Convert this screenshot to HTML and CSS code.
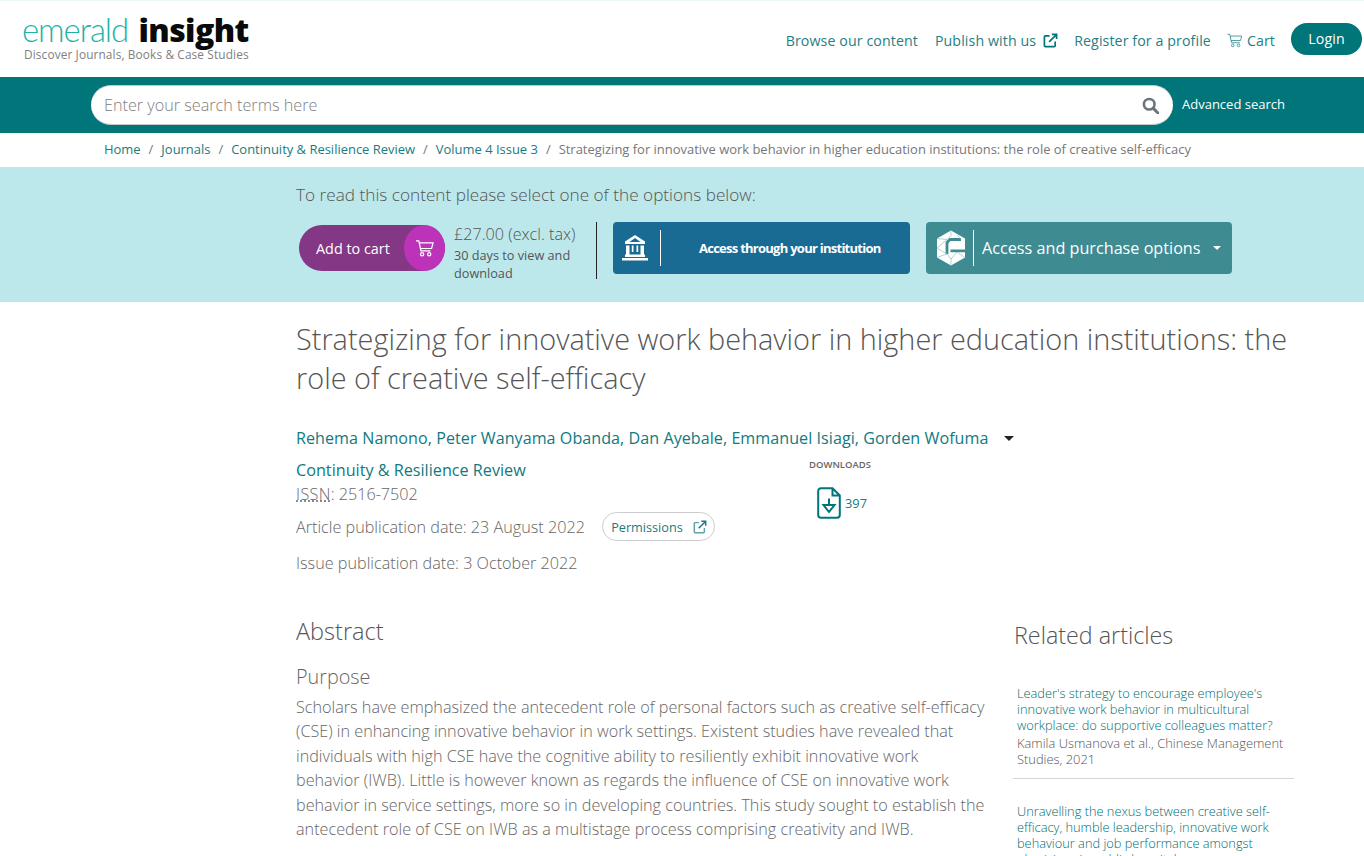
FILE: index.html
```html
<!DOCTYPE html>
<html lang="en">
<head>
<meta charset="utf-8">
<title>Strategizing for innovative work behavior</title>
<link rel="stylesheet" href="styles.css">
</head>
<body>
<header class="top">
  <a class="logo">
    <span class="logo-main"><span class="logo-a">emerald</span> <span class="logo-b">insight</span></span>
    <span class="logo-sub">Discover Journals, Books &amp; Case Studies</span>
  </a>
  <nav class="nav">
    <a>Browse our content</a>
    <a>Publish with us <svg class="ext" viewBox="0 0 16 16"><path d="M7 3H2.500a1 1 0 0 0-1 1v9.500a1 1 0 0 0 1 1H12a1 1 0 0 0 1-1V9M9.500 1.500h5v5M14.300 1.700 6.500 9.500" fill="none" stroke="currentColor" stroke-width="1.800"/></svg></a>
    <a class="reg">Register for a profile</a>
    <a class="cart"><svg class="cart-i" viewBox="0 0 18 16"><path d="M.5 1h2.600l2 9.500h9.400M3.500 3h13l-1.300 5H4.600" fill="none" stroke="currentColor" stroke-width="1"/><circle cx="6.500" cy="13.500" r="1.500" fill="none" stroke="currentColor"/><circle cx="13" cy="13.500" r="1.500" fill="none" stroke="currentColor"/></svg>Cart</a>
    <a class="login">Login</a>
  </nav>
</header>
<div class="searchbar">
  <div class="search">
    <span class="ph">Enter your search terms here</span>
    <svg class="mag" viewBox="0 0 16 16"><circle cx="6.800" cy="6.800" r="5" fill="none" stroke="currentColor" stroke-width="2.400"/><path d="m10.500 10.500 4.500 4.500" stroke="currentColor" stroke-width="2.800" stroke-linecap="round"/></svg>
  </div>
  <a class="adv">Advanced search</a>
</div>
<nav class="crumbs">
  <a>Home</a><i>/</i><a>Journals</a><i>/</i><a>Continuity &amp; Resilience Review</a><i>/</i><a>Volume 4 Issue 3</a><i>/</i><span>Strategizing for innovative work behavior in higher education institutions: the role of creative self-efficacy</span>
</nav>
<section class="banner">
  <p class="select">To read this content please select one of the options below:</p>
  <div class="options">
    <a class="addcart"><span>Add to cart</span><b class="cartc"><svg viewBox="0 0 20 20"><path d="M1 2h3l2.300 10.500h10M4.500 4H19l-1.500 6H5.800" fill="none" stroke="#fff" stroke-width="1.300"/><circle cx="7.500" cy="16" r="1.700" fill="none" stroke="#fff" stroke-width="1.300"/><circle cx="15" cy="16" r="1.700" fill="none" stroke="#fff" stroke-width="1.300"/></svg></b></a>
    <div class="price"><span class="amt">£27.00 (excl. tax)</span><span class="days">30 days to view and download</span></div>
    <div class="vr"></div>
    <a class="inst">
      <svg class="bank" viewBox="0 0 28 28"><path fill-rule="evenodd" d="M14 1 4 7.500V10h20V7.500zM14 4l5.500 4h-11z" fill="#fff"/><path d="M5 11.500h3.500V21H5zM10.800 11.500h1.700V18h-1.700zM15.500 11.500h1.700V18h-1.700zM19.500 11.500H23V21h-3.500zM4 20.500h20v2.500H4zM1 24h26v2.500H1z" fill="#fff"/></svg>
      <span class="sep s1"></span>
      <span class="inst-t">Access through your institution</span>
    </a>
    <a class="purch">
      <svg class="elogo" viewBox="0 0 30 36"><path d="M15 .5 29 8.500V27.500L15 35.500 1 27.500V8.500z" fill="#fff"/><path d="M25 9.500H14L11 12.500V24M14.500 20.800H30" fill="none" stroke="#3e8b92" stroke-width="2.800"/><path d="M15 .5v5l-4 4L1 8.500M11 9.500 1 18l10 6M1 27.500l10-3.500 4 5v6.500M15 29l6-7 8 5.500M21 5l4 4.500" fill="none" stroke="#8fc0c3" stroke-width=".7"/></svg>
      <span class="sep s2"></span>
      <span class="purch-t">Access and purchase options</span>
      <span class="caret-w"></span>
    </a>
  </div>
</section>
<main class="main">
  <h1>Strategizing for innovative work behavior in higher education institutions: the role of creative self-efficacy</h1>
  <div class="authors"><a>Rehema Namono, Peter Wanyama Obanda, Dan Ayebale, Emmanuel Isiagi, Gorden Wofuma</a><span class="caret-d"></span></div>
  <div class="meta">
    <div class="meta-l">
      <a class="jname">Continuity &amp; Resilience Review</a>
      <div class="issn"><abbr>ISSN</abbr>: 2516-7502</div>
      <div class="date">Article publication date: 23 August 2022 <a class="perm">Permissions <svg class="ext2" viewBox="0 0 16 16"><path d="M7 3H2.500a1 1 0 0 0-1 1v9.500a1 1 0 0 0 1 1H12a1 1 0 0 0 1-1V9" fill="none" stroke="#5fa3a6" stroke-width="1.700"/><path d="M9.500 1.500h5v5M14.300 1.700 6.500 9.500" fill="none" stroke="currentColor" stroke-width="1.700"/></svg></a></div>
      <div class="date2">Issue publication date: 3 October 2022</div>
    </div>
    <div class="dl">
      <div class="dl-h">DOWNLOADS</div>
      <div class="dl-b"><svg class="file" viewBox="0 0 24 32"><path d="M15.500 1.200H4a2.800 2.800 0 0 0-2.800 2.800v24A2.800 2.800 0 0 0 4 30.800h16a2.800 2.800 0 0 0 2.800-2.800V8.500zM15.500 1.200v7.300h7.300" fill="none" stroke="currentColor" stroke-width="2"/><path d="M12 11.500v6.500M6.500 18h11L12 25z" fill="none" stroke="currentColor" stroke-width="2"/></svg><span>397</span></div>
    </div>
  </div>
  <div class="cols">
    <article class="abs">
      <h2>Abstract</h2>
      <h3>Purpose</h3>
      <p>Scholars have emphasized the antecedent role of personal factors such as creative self-efficacy (CSE) in enhancing innovative behavior in work settings. Existent studies have revealed that individuals with high CSE have the cognitive ability to resiliently exhibit innovative work behavior (IWB). Little is however known as regards the influence of CSE on innovative work behavior in service settings, more so in developing countries. This study sought to establish the antecedent role of CSE on IWB as a multistage process comprising creativity and IWB.</p>
    </article>
    <aside class="rel">
      <h2>Related articles</h2>
      <div class="item">
        <a>Leader's strategy to encourage employee's innovative work behavior in multicultural workplace: do supportive colleagues matter?</a>
        <span>Kamila Usmanova et al., Chinese Management Studies, 2021</span>
      </div>
      <div class="item last">
        <a>Unravelling the nexus between creative self-efficacy, humble leadership, innovative work behaviour and job performance amongst physicians in public hospitals</a>
      </div>
    </aside>
  </div>
</main>
</body>
</html>
```
FILE: styles.css
```css
* { box-sizing: border-box; }
html, body { height: 856px; overflow: hidden; }
body { margin: 0; font-family: "Open Sans", sans-serif; color: #666; background: #fff; }
a { color: #00757a; text-decoration: none; }

.top { height: 77px; display: flex; justify-content: space-between; align-items: flex-start; border-top: 1px solid #eef7f7; }
.logo { display: flex; flex-direction: column; margin: 11px 0 0 22px; }
.logo-main { font-size: 33px; line-height: 34px; font-family: Lato, sans-serif; white-space: nowrap; }
.logo-a { color: #1fb3a4; font-weight: 300; letter-spacing: -1.1px; }
.logo-b { color: #0a0a0a; font-weight: 800; font-family: "Open Sans", sans-serif; font-size: 32px; letter-spacing: -0.6px; margin-left: 2px; }
.logo-sub { font-size: 11.850px; line-height: 14px; color: #808080; margin: 0 0 0 2px; letter-spacing: 0.12px; }

.nav { display: flex; align-items: center; margin: 22px 2px 0 0; font-size: 14.200px; letter-spacing: 0.1px; }
.nav > a { margin-left: 17px; white-space: nowrap; color: #1f8085; display: flex; align-items: center; padding-top: 2px; }
.ext { width: 15px; height: 15px; margin-left: 7px; color: #00757a; }
.nav .reg { margin-left: 16px; }
.nav .cart { margin-left: 16px; }
.cart-i { width: 16px; height: 15px; margin-right: 4px; color: #3d9296; }
.nav .login { margin-left: 16px; width: 71px; height: 32px; background: #00757a; color: #fff; border-radius: 16px; justify-content: center; font-weight: 500; padding: 0 0 2px; }

.searchbar { height: 56px; background: #00757a; display: flex; align-items: center; padding: 0 0 0 91px; }
.search { width: 1082px; height: 40px; background: #fff; border-radius: 20px; border-bottom: 1px solid #c8c8c8; border-top: 1px solid #c8c8c8; display: flex; align-items: center; justify-content: space-between; padding: 0 14px 0 13px; }
.ph { font-size: 16.200px; font-weight: 300; color: #808080; }
.mag { width: 17px; height: 17px; color: #6d7479; }
.adv { color: #fff; font-size: 13px; margin: 0 0 2px 9px; font-weight: 500; white-space: nowrap; }

.crumbs { height: 34px; display: flex; align-items: center; padding: 0 0 2px 104px; font-size: 12.960px; white-space: nowrap; }
.crumbs a { color: #167c80; }
.crumbs i { font-style: normal; margin: 0 8px; color: #777; }
.crumbs span { color: #777; }

.banner { height: 135px; background: #bce8eb; padding: 16px 0 0 296px; }
.select { margin: 0; font-size: 17.200px; line-height: 24px; font-weight: 300; color: #555; white-space: nowrap; }
.options { display: flex; align-items: flex-start; margin-top: 15px; }
.addcart { margin: 3px 0 0 3px; width: 146px; height: 46px; border-radius: 23px; background: #843784; color: #fff; font-size: 14.400px; display: flex; align-items: center; justify-content: space-between; padding-left: 17px; }
.cartc { width: 41px; height: 46px; background: #bc33b9; border-radius: 50%; display: flex; align-items: center; justify-content: center; }
.cartc svg { width: 19px; height: 19px; }
.price { width: 141px; margin-left: 9px; display: flex; flex-direction: column; }
.amt { font-size: 16.200px; line-height: 24px; font-weight: 300; color: #555; white-space: nowrap; }
.days { font-size: 12.700px; line-height: 18px; color: #555; }
.vr { width: 1px; height: 57px; background: #222; margin: 0 16px 0 1px; }
.inst { width: 297px; height: 52px; background: #1a6b94; border-radius: 4px; color: #fff; display: flex; align-items: center; padding-left: 8px; font-size: 13px; font-weight: 700; letter-spacing: -0.74px; }
.bank { width: 28px; height: 28px; }
.sep { width: 1px; height: 36px; background: #fff; display: block; }
.s1 { margin-left: 11px; }
.inst-t { margin-left: 38px; }
.purch { width: 306px; height: 52px; margin-left: 16px; background: #3e8b92; border-radius: 4px; color: #fff; display: flex; align-items: center; padding-left: 10px; font-size: 16.200px; }
.elogo { width: 30px; height: 36px; }
.s2 { margin: 0 8px 0 7px; }
.purch-t { white-space: nowrap; }
.caret-w { margin-left: 12px; border: 4px solid transparent; border-top-color: #fff; border-bottom: 0; }

.main { padding: 0 70px 0 296px; }
h1 { margin: 17px 0 0; font-size: 28.860px; line-height: 39px; font-weight: 300; color: #555; }
.authors { margin-top: 29px; font-size: 16.100px; line-height: 24px; display: flex; align-items: center; white-space: nowrap; letter-spacing: 0.05px; }
.authors a { color: #0f7a7f; }
.caret-d { margin-left: 16px; border: 5px solid transparent; border-top-color: #222; border-bottom: 0; }
.meta { display: flex; margin-top: 8px; height: 121px; }
.meta-l { width: 513px; font-size: 16.200px; font-weight: 300; color: #666; }
.jname { display: block; font-weight: 400; line-height: 24px; color: #0f7a7f; }
.issn { line-height: 24px; }
abbr { text-decoration: underline dotted; letter-spacing: 0.3px; }
.date { margin-top: 6px; line-height: 24px; display: flex; align-items: center; white-space: pre; }
.perm { margin-left: 13px; width: 113px; height: 29px; border: 1px solid #ccc; border-radius: 15px; font-size: 12.700px; font-weight: 400; color: #167c80; display: flex; align-items: center; justify-content: space-between; padding: 0 7px 0 8px; }
.ext2 { width: 14px; height: 14px; }
.date2 { margin-top: 10px; line-height: 24px; }
.dl-h { font-size: 9.500px; line-height: 14px; color: #666; font-weight: 600; white-space: nowrap; }
.dl-b { display: flex; align-items: center; margin: 15px 0 0 8px; font-size: 12.800px; color: #167c80; }
.file { width: 24px; height: 32px; color: #00757a; margin-right: 4px; }

.cols { display: flex; justify-content: space-between; margin-top: 36px; }
.abs { width: 689.500px; }
.abs h2 { margin: 0; font-size: 23.500px; line-height: 32px; font-weight: 300; color: #555; }
.abs h3 { margin: 17px 0 0; font-size: 19.800px; line-height: 26px; font-weight: 300; color: #666; }
.abs p { margin: 5px 0 0; font-size: 16.200px; line-height: 24.400px; font-weight: 300; color: #666; }
.rel { width: 281px; margin-top: 4px; }
.rel h2 { margin: 0 0 0 1px; font-size: 23.300px; line-height: 32px; font-weight: 300; color: #555; }
.item { padding: 34px 4px 11px; border-bottom: 1px solid #d5d5d5; font-size: 12.800px; font-weight: 300; line-height: 16px; display: flex; flex-direction: column; }
.item.last { border: 0; padding-top: 24px; }
.item a { color: #006d72; }
.item span { margin-top: 2px; color: #555; font-size: 12.900px; }
```
